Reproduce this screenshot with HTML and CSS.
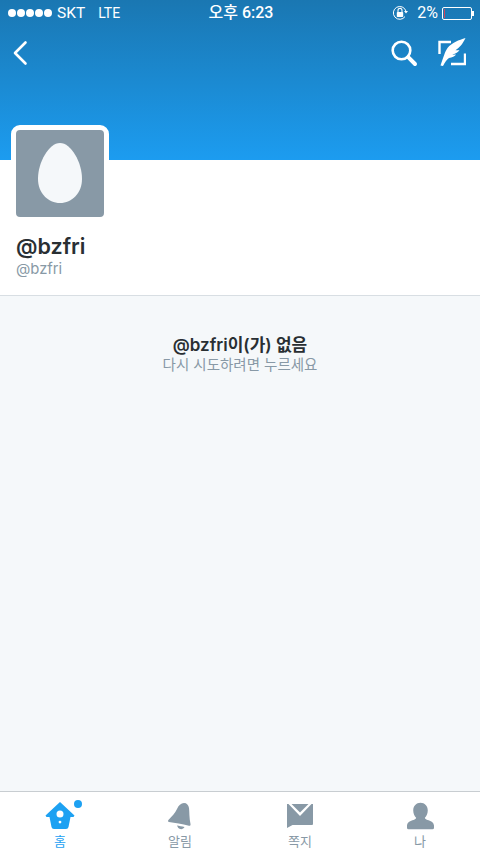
FILE: index.html
```html
<!DOCTYPE html>
<html lang="ko">
<head>
    <meta charset="UTF-8">
    <meta name="viewport" content="width=device-width, initial-scale=1.0">
    <title>@bzfri</title>
    <link rel="stylesheet" href="styles.css">
</head>
<body>
    <div class="app">
        <header class="banner">
            <div class="status-bar">
                <div class="status-left">
                    <span class="signal"><i></i><i></i><i></i><i></i><i></i></span>
                    <span class="carrier">SKT</span>
                    <span class="network">LTE</span>
                </div>
                <div class="status-time">오후 6:23</div>
                <div class="status-right">
                    <svg class="lock-icon" width="16" height="16" viewBox="0 0 16 16">
                        <path d="M13 11.6A6.4 6.4 0 1 1 13.9 6" fill="none" stroke="#fff" stroke-width="1"/>
                        <path d="M12 6h4l-2 2.4z" fill="#fff"/>
                        <rect x="4.8" y="7" width="6.4" height="5" rx=".8" fill="#fff"/>
                        <path d="M6 7V5.4a2 2 0 0 1 4 0V7" fill="none" stroke="#fff" stroke-width="1.1"/>
                    </svg>
                    <span class="battery-text">2%</span>
                    <span class="battery"><span class="battery-level"></span></span>
                    <span class="battery-tip"></span>
                </div>
            </div>
            <nav class="nav-bar">
                <svg class="back-icon" width="16" height="26" viewBox="0 0 16 26">
                    <path d="M13.5 2.5 3 13l10.5 10.5" fill="none" stroke="#fff" stroke-width="2.6" stroke-linecap="round" stroke-linejoin="round"/>
                </svg>
                <div class="nav-actions">
                    <svg width="28" height="28" viewBox="0 0 28 28">
                        <circle cx="11.5" cy="11.5" r="8.8" fill="none" stroke="#fff" stroke-width="2.6"/>
                        <path d="M18.2 18.2 25 25" stroke="#fff" stroke-width="4" stroke-linecap="round"/>
                    </svg>
                    <svg class="compose-icon" width="28" height="30" viewBox="0 0 28 30">
                        <path d="M13 5H1.5v12M27 16.5V27H13" fill="none" stroke="#fff" stroke-width="2.4"/>
                        <path d="M27.5 1C21 3 14 5.500 9.500 11 7 14.500 5.500 20 2.500 28.500l2.500.5C7 25 9 22.500 11 21c3-.5 6-1.500 7-3.500-1.500.2-3 .2-4 0 3-.5 6-2 7.500-4.500-1.500.3-3 .3-4 .2C21 11 24.500 7.500 27.500 1z" fill="#fff"/>
                    </svg>
                </div>
            </nav>
        </header>

        <section class="profile">
            <div class="avatar">
                <svg width="44" height="60" viewBox="0 0 44 60">
                    <path d="M22 0C33 0 44 19 44 36 44 50 34 60 22 60S0 50 0 36C0 19 11 0 22 0z" fill="#f5f8fa"/>
                </svg>
            </div>
            <h1 class="profile-name">@bzfri</h1>
            <div class="profile-handle">@bzfri</div>
        </section>

        <main class="content">
            <div class="empty-title">@bzfri이(가) 없음</div>
            <div class="empty-hint">다시 시도하려면 누르세요</div>
        </main>

        <footer class="tab-bar">
            <div class="tab tab-active">
                <span class="tab-dot"></span>
                <span class="tab-icon">
                    <svg width="30" height="28" viewBox="0 0 30 28">
                        <path fill-rule="evenodd" d="M15 0 29.500 13.500l-1 1.500H25.500L23.500 25q-.4 2-2.500 2H9q-2.100 0-2.500-2L4.500 15H1.500l-1-1.500zM15 8.500a3.500 3.500 0 1 0 0 7 3.500 3.500 0 0 0 0-7zM15 18.700a1.400 1.400 0 1 0 0 2.800 1.400 1.400 0 0 0 0-2.800z" fill="#1da1f2"/>
                    </svg>
                </span>
                <span class="tab-label">홈</span>
            </div>
            <div class="tab">
                <span class="tab-icon">
                    <svg width="24" height="28" viewBox="0 0 24 28">
                        <path d="M16 1c2.800 0 4.500 2 5 5 .5 4 .2 10 1.500 16 .2 1.300-.3 2-1.500 1.700C14 22 7 21 1 20c-1-.2-1.200-1.200-.6-2C4 14 7 11.500 9 7c1.500-3.500 4-6 7-6z" fill="#8899a6"/>
                        <path d="M9 23.500c2 .4 5 1 7.500 1.500-1 1.800-2.700 2.500-4.500 2-1.200-.3-2.300-1.500-3-3.500z" fill="#8899a6"/>
                    </svg>
                </span>
                <span class="tab-label">알림</span>
            </div>
            <div class="tab">
                <span class="tab-icon">
                    <svg width="26" height="24" viewBox="0 0 26 24">
                        <path d="M0 0h1.500L13 12 24.500 0H26v20q0 1-1 1H5.500L0 24z" fill="#8899a6"/>
                        <path d="M4.500 0h17L13 8.500z" fill="#8899a6"/>
                    </svg>
                </span>
                <span class="tab-label">쪽지</span>
            </div>
            <div class="tab">
                <span class="tab-icon">
                    <svg width="27" height="28" viewBox="0 0 26 25.500">
                        <path d="M13 0c4 0 7 3 7 7.500 0 3-1.300 5.500-2.800 7 .2 1 1 1.500 2.500 2 3 .8 6 1.800 6.300 5.500V24q0 1.500-1.500 1.500H1.500Q0 25.500 0 24v-2c.3-3.700 3.300-4.700 6.300-5.500 1.500-.5 2.300-1 2.500-2-1.500-1.500-2.800-4-2.800-7C6 3 9 0 13 0z" fill="#8899a6"/>
                    </svg>
                </span>
                <span class="tab-label">나</span>
            </div>
        </footer>
    </div>
</body>
</html>
```

FILE: styles.css
```css
* {
    box-sizing: border-box;
}
body {
    margin: 0;
    font-family: "Inter", "Noto Sans CJK KR", sans-serif;
    background-color: #ffffff;
}
.app {
    display: flex;
    flex-direction: column;
    width: 480px;
    height: 854px;
    overflow: hidden;
}

/* Blue banner with status bar and nav */
.banner {
    height: 160px;
    flex-shrink: 0;
    background: linear-gradient(to bottom, #1a77b2, #1c9cf0);
    color: #ffffff;
}
.status-bar {
    display: grid;
    grid-template-columns: 1fr auto 1fr;
    align-items: center;
    height: 26px;
    padding: 0 6px 0 8px;
    font-family: "Roboto", "Noto Sans CJK KR", sans-serif;
    font-size: 15.500px;
    line-height: 18px;
}
.status-left {
    display: flex;
    align-items: center;
}
.signal {
    display: flex;
    gap: 1px;
    margin-right: 5px;
}
.signal i {
    width: 8px;
    height: 8px;
    border-radius: 50%;
    background-color: #ffffff;
}
.network {
    margin-left: 13px;
    font-size: 14px;
}
.status-time {
    font-size: 16px;
    font-weight: 500;
}
.status-right {
    display: flex;
    align-items: center;
    justify-content: flex-end;
}
.lock-icon {
    margin-right: 9px;
}
.battery-text {
    font-size: 16px;
    margin-right: 4px;
}
.battery {
    width: 30px;
    height: 13px;
    padding: 1px;
    border: 1px solid #ffffff;
    border-radius: 2px;
}
.battery-level {
    display: block;
    width: 1px;
    height: 100%;
    background-color: #d0455a;
}
.battery-tip {
    width: 2px;
    height: 5px;
    background-color: #ffffff;
}
.nav-bar {
    display: flex;
    align-items: center;
    justify-content: space-between;
    padding: 13px 14px 0 12px;
}
.nav-actions {
    display: flex;
    align-items: center;
    gap: 20px;
}
.compose-icon {
    margin-top: -3px;
}

/* Profile */
.profile {
    flex-shrink: 0;
    height: 136px;
    padding: 0 16px;
    border-bottom: 1px solid #d8dee3;
    background-color: #ffffff;
}
.avatar {
    display: flex;
    align-items: center;
    justify-content: center;
    width: 98px;
    height: 97px;
    margin: -35px 0 0 -5px;
    border: 5px solid #ffffff;
    border-radius: 9px;
    background-color: #8899a6;
}
.avatar svg {
    margin-bottom: 2px;
}
.profile-name {
    margin: 10px 0 0;
    font-size: 21.500px;
    line-height: 28px;
    font-weight: 600;
    color: #292f33;
}
.profile-handle {
    font-size: 14.800px;
    line-height: 18px;
    color: #8899a6;
}

/* Empty state */
.content {
    flex: 1;
    padding-top: 40px;
    text-align: center;
    background-color: #f5f8fa;
}
.empty-title {
    font-size: 17px;
    line-height: 19px;
    font-weight: 600;
    color: #292f33;
}
.empty-hint {
    margin-top: 1px;
    font-size: 14.500px;
    line-height: 18px;
    color: #8899a6;
}

/* Bottom tabs */
.tab-bar {
    display: grid;
    grid-template-columns: repeat(4, 1fr);
    flex-shrink: 0;
    height: 63px;
    border-top: 1px solid #c8cdd1;
    background-color: #ffffff;
}
.tab {
    position: relative;
    display: flex;
    flex-direction: column;
    align-items: center;
    justify-content: flex-end;
    padding-bottom: 5px;
    color: #8899a6;
}
.tab-active {
    color: #1da1f2;
}
.tab-icon {
    display: flex;
    align-items: center;
    justify-content: center;
    height: 28px;
    margin-bottom: 3px;
}
.tab-label {
    font-size: 13px;
    line-height: 16px;
}
.tab-dot {
    position: absolute;
    top: 8px;
    left: 74px;
    width: 8px;
    height: 8px;
    border-radius: 50%;
    background-color: #1da1f2;
}
```
